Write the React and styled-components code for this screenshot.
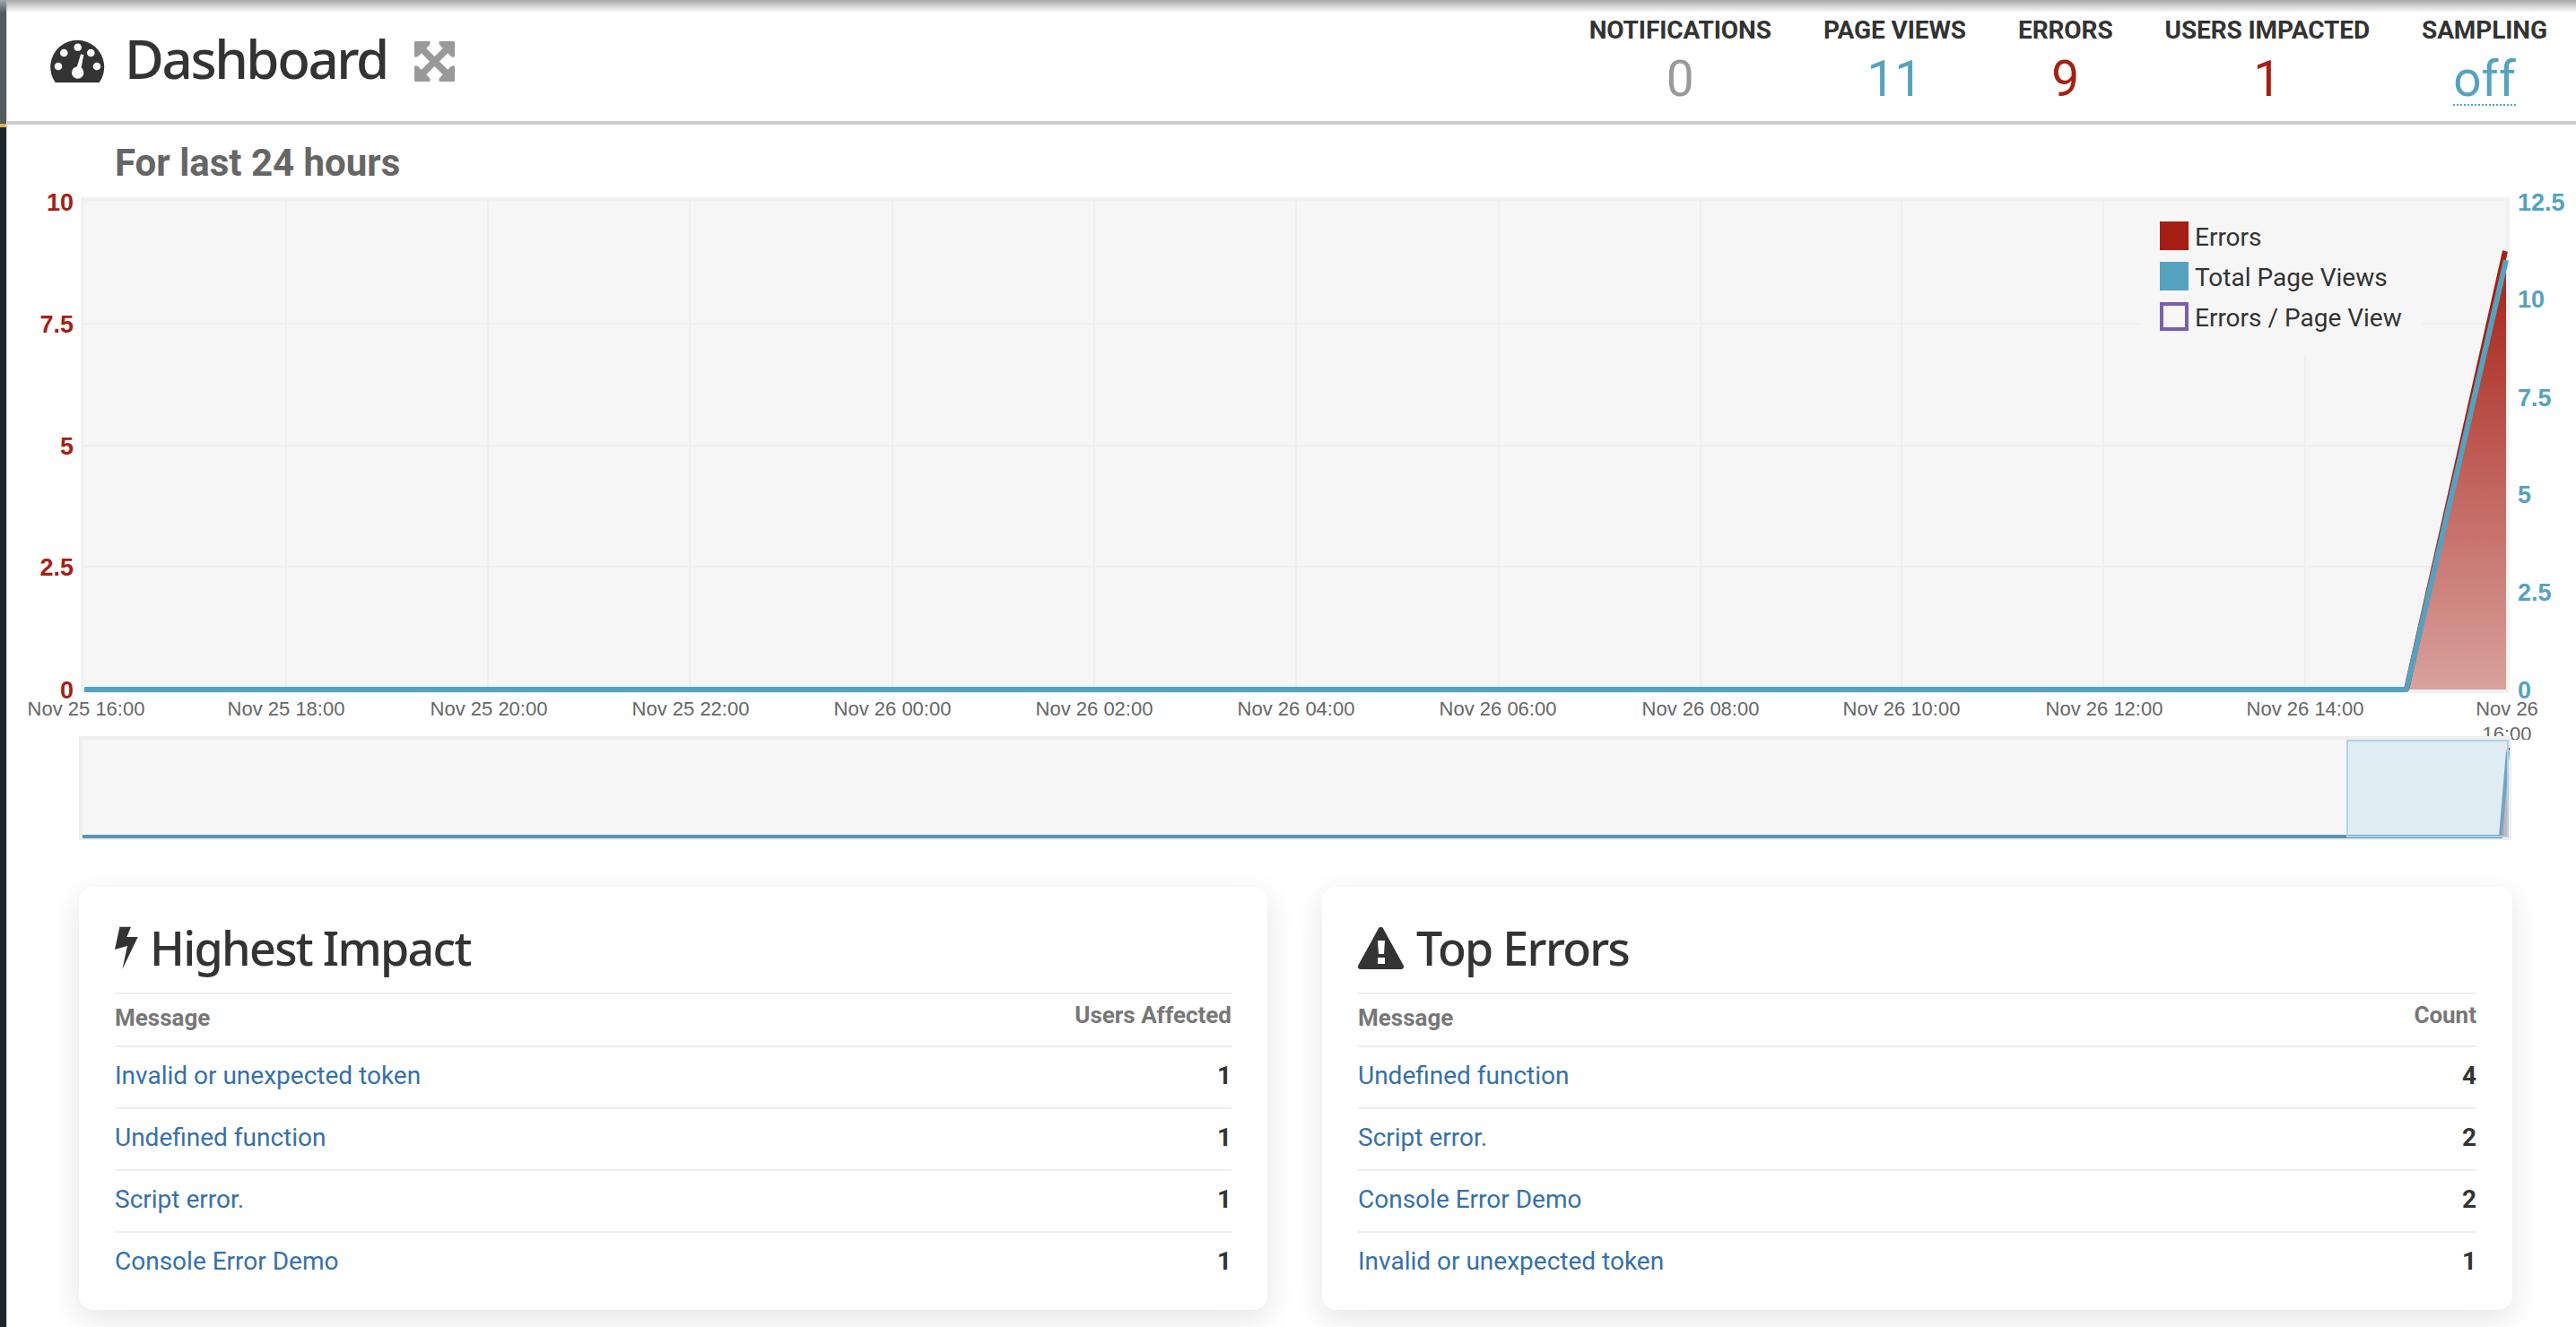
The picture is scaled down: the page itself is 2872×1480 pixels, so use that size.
import React from "react";
import styled, { createGlobalStyle } from "styled-components";

const Global = createGlobalStyle`
  html, body { margin: 0; padding: 0; background: #fff; }
  * { box-sizing: border-box; }
`;

const RED = "#a61f14";
const BLUE = "#55a2bf";

const Page = styled.div`
  position: relative;
  display: grid;
  grid-template-columns: 8px 1fr;
  height: 1480px;
  overflow: hidden;
  font-family: Roboto, "Liberation Sans", sans-serif;
  color: #333;
  background: #fff;
`;
const TopShade = styled.div`
  position: absolute;
  left: 0;
  right: 0;
  top: 0;
  height: 14px;
  background: linear-gradient(to bottom, #a8a8a8, rgba(255, 255, 255, 0));
  pointer-events: none;
`;
const Rail = styled.aside`
  display: flex;
  flex-direction: column;
  border-right: 1px solid #dcdcdc;
  background: #20262f;
`;
const RailTop = styled.div`
  height: 138px;
  background: #555a60;
`;
const RailMark = styled.div`
  height: 4px;
  background: #e0b050;
`;
const Main = styled.main`
  min-width: 0;
`;
const Header = styled.header`
  display: flex;
  justify-content: space-between;
  height: 139px;
  padding: 0 32px 0 48px;
  border-bottom: 4px solid #ccc;
`;
const TitleBlock = styled.div`
  display: flex;
  align-items: flex-start;
`;
const PageTitle = styled.h1`
  margin: 25px 0 0 22px;
  font: 500 60px/80px "Noto Sans", sans-serif;
  letter-spacing: -2.4px;
  color: #333;
`;
const GaugeIcon = styled.svg`
  width: 61px;
  height: 48px;
  margin-top: 44px;
`;
const ExpandIcon = styled.svg`
  width: 45px;
  height: 45px;
  margin: 46px 0 0 30px;
`;
const Stats = styled.div`
  display: flex;
  gap: 58px;
`;
const Stat = styled.div`
  display: flex;
  flex-direction: column;
  align-items: center;
  padding-top: 18px;
`;
const StatLabel = styled.div`
  font: 700 28px/32px Roboto, sans-serif;
  text-transform: uppercase;
  letter-spacing: -0.1px;
  color: #333;
`;
const StatValue = styled.div`
  margin-top: 7px;
  font: 400 55px/62px Roboto, sans-serif;
  color: ${(p) => p.$color};
`;
const StatToggle = styled(StatValue)`
  height: 61px;
  border-bottom: 2px dotted ${BLUE};
`;
const Range = styled.h2`
  height: 61px;
  margin: 0;
  padding: 20px 0 0 120px;
  font: 700 42px/46px Roboto, sans-serif;
  color: #666;
`;
const ChartSvg = styled.svg`
  display: block;
  width: 2864px;
  height: 740px;
`;
const AxisText = styled.text`
  font: 700 27px "Liberation Sans", sans-serif;
`;
const TimeText = styled.text`
  font: 400 22px "Liberation Sans", sans-serif;
  fill: #666;
`;
const LegendText = styled.text`
  font: 400 28px Roboto, sans-serif;
  fill: #333;
`;
const Cards = styled.section`
  display: grid;
  grid-template-columns: 1325px 1327px;
  gap: 61px;
  margin: 49px 0 0 80px;
`;
const Card = styled.article`
  height: 472px;
  padding: 0 40px;
  border-radius: 16px;
  background: #fff;
  box-shadow: 0 10px 34px rgba(0, 0, 0, 0.11);
`;
const CardTitle = styled.h3`
  display: flex;
  align-items: center;
  gap: ${(p) => p.$gap}px;
  height: 118px;
  margin: 0;
  padding-top: 18px;
  font: 500 52px/60px "Noto Sans", sans-serif;
  letter-spacing: -1.7px;
  color: #333;
`;
const Row = styled.div`
  display: flex;
  align-items: center;
  justify-content: space-between;
  height: ${(p) => (p.$head ? 59 : 69)}px;
  padding-bottom: ${(p) => (p.$head ? 5 : 4)}px;
  border-top: 2px solid #eee;
`;
const HeadCell = styled.span`
  font: 700 26px/30px Roboto, sans-serif;
  color: #777;
`;
const HeadCellEnd = styled(HeadCell)`
  margin-top: -6px;
`;
const ErrorLink = styled.a`
  font: 400 28px/34px Roboto, sans-serif;
  color: #3670a8;
  text-decoration: none;
`;
const Count = styled.span`
  font: 700 28px/34px Roboto, sans-serif;
  color: #333;
`;

const yLeft = [["10", 225], ["7.5", 361], ["5", 497], ["2.5", 632], ["0", 769]];
const yRight = [["12.5", 225], ["10", 333], ["7.5", 443], ["5", 551], ["2.5", 660], ["0", 769]];
const gridX = [319, 544, 769, 995, 1220, 1445, 1671, 1896, 2120, 2345, 2570];
const times = [
  ["Nov 25 16:00", 96], ["Nov 25 18:00", 319], ["Nov 25 20:00", 545], ["Nov 25 22:00", 770],
  ["Nov 26 00:00", 995], ["Nov 26 02:00", 1220], ["Nov 26 04:00", 1445], ["Nov 26 06:00", 1670],
  ["Nov 26 08:00", 1896], ["Nov 26 10:00", 2120], ["Nov 26 12:00", 2346], ["Nov 26 14:00", 2570],
];
const legend = [
  ["Errors", 247, RED],
  ["Total Page Views", 292, BLUE],
];

function Chart() {
  return (
    <ChartSvg viewBox="8 200 2864 740">
      <defs>
        <linearGradient id="errFill" x1="0" y1="0" x2="0" y2="1">
          <stop offset="0" stopColor="#a61f14" />
          <stop offset="1" stopColor="#d9a19d" />
        </linearGradient>
        <clipPath id="timeClip">
          <rect x="2700" y="770" width="172" height="55" />
        </clipPath>
      </defs>

      <rect x="90" y="220" width="2708" height="553" fill="#f1f1f1" />
      <rect x="94" y="224" width="2700" height="545" fill="#f6f6f6" />
      {gridX.map((x) => (
        <line key={x} x1={x} x2={x} y1="224" y2="769" stroke="#efefef" strokeWidth="2" />
      ))}
      {[361, 497, 632].map((y) => (
        <line key={y} x1="94" x2="2794" y1={y} y2={y} stroke="#efefef" strokeWidth="2" />
      ))}

      <rect x="2386" y="224" width="314" height="174" fill="#f6f6f6" />
      {legend.map(([label, y, c]) => (
        <g key={label}>
          <rect x="2408" y={y} width="32" height="32" fill={c} />
          <LegendText x="2447" y={y + 27}>{label}</LegendText>
        </g>
      ))}
      <rect x="2410" y="339" width="28" height="28" fill="none" stroke="#7a5fb0" strokeWidth="4" />
      <LegendText x="2447" y="364">Errors / Page View</LegendText>

      <polygon points="2684,769 2794,282 2794,769" fill="url(#errFill)" />
      <line x1="2683" y1="769" x2="2793" y2="280" stroke={RED} strokeWidth="6" />
      <polyline points="94,769 2683,769 2794,290" fill="none" stroke={BLUE} strokeWidth="6" strokeLinejoin="round" />

      {yLeft.map(([t, y]) => (
        <AxisText key={t} x="82" y={y + 10} textAnchor="end" fill={RED}>{t}</AxisText>
      ))}
      {yRight.map(([t, y]) => (
        <AxisText key={t} x="2807" y={y + 10} fill={BLUE}>{t}</AxisText>
      ))}
      {times.map(([t, x]) => (
        <TimeText key={t} x={x} y="798" textAnchor="middle">{t}</TimeText>
      ))}
      <g clipPath="url(#timeClip)">
        <TimeText x="2795" y="798" textAnchor="middle">Nov 26</TimeText>
        <TimeText x="2795" y="826" textAnchor="middle">16:00</TimeText>
      </g>

      <rect x="88" y="821" width="2712" height="116" fill="#eee" />
      <rect x="92" y="825" width="2704" height="108" fill="#f6f6f6" />
      <polygon points="2788,933 2797,836 2797,933" fill="#d9a19d" />
      <polyline points="92,933 2788,933 2796,838" fill="none" stroke="#5a93ad" strokeWidth="4" />
      <line x1="2796" y1="837" x2="2797" y2="834" stroke={RED} strokeWidth="3" />
      <rect x="2617" y="826" width="179" height="107" fill="#acd4ea" fillOpacity="0.3" stroke="#acd4ea" strokeWidth="2" />
    </ChartSvg>
  );
}

const impact = [
  ["Invalid or unexpected token", 1],
  ["Undefined function", 1],
  ["Script error.", 1],
  ["Console Error Demo", 1],
];
const top = [
  ["Undefined function", 4],
  ["Script error.", 2],
  ["Console Error Demo", 2],
  ["Invalid or unexpected token", 1],
];

function ErrorCard({ icon, title, gap, countLabel, rows }) {
  return (
    <Card>
      <CardTitle $gap={gap}>{icon}{title}</CardTitle>
      <Row $head>
        <HeadCell>Message</HeadCell>
        <HeadCellEnd>{countLabel}</HeadCellEnd>
      </Row>
      {rows.map(([m, n]) => (
        <Row key={m}>
          <ErrorLink href="#">{m}</ErrorLink>
          <Count>{n}</Count>
        </Row>
      ))}
    </Card>
  );
}

export default function App() {
  return (
    <Page>
      <Global />
      <Rail>
        <RailTop />
        <RailMark />
      </Rail>
      <Main>
        <Header>
          <TitleBlock>
            <GaugeIcon viewBox="0 0 61 48">
              <path d="M5.7 48 A30 30 0 1 1 54.7 48 Z" fill="#333" />
              <g fill="#fff">
                <circle cx="30.7" cy="8.7" r="4.3" />
                <circle cx="15.3" cy="15" r="4.3" />
                <circle cx="45.3" cy="15" r="4.3" />
                <circle cx="9" cy="30" r="4.3" />
                <circle cx="52" cy="30" r="4.3" />
                <circle cx="30.7" cy="37" r="6.7" />
                <polygon points="28.2,36 33.8,36 37.3,17 34,16.4" />
              </g>
            </GaugeIcon>
            <PageTitle>Dashboard</PageTitle>
            <ExpandIcon viewBox="0 0 45 45">
              <path d="M8 8 L37 37 M37 8 L8 37" stroke="#999" strokeWidth="7.5" />
              <path d="M1 0 H17 Q18.5 2.5 17 4 L4 17 Q1.5 18.5 0 17 V1 Z M44 0 H28 Q26.5 2.5 28 4 L41 17 Q43.5 18.5 45 17 V1 Z M1 45 H17 Q18.5 42.5 17 41 L4 28 Q1.5 26.5 0 28 V44 Z M44 45 H28 Q26.5 42.5 28 41 L41 28 Q43.5 26.5 45 28 V44 Z" fill="#999" />
            </ExpandIcon>
          </TitleBlock>
          <Stats>
            <Stat><StatLabel>Notifications</StatLabel><StatValue $color="#999">0</StatValue></Stat>
            <Stat><StatLabel>Page Views</StatLabel><StatValue $color={BLUE}>11</StatValue></Stat>
            <Stat><StatLabel>Errors</StatLabel><StatValue $color={RED}>9</StatValue></Stat>
            <Stat><StatLabel>Users Impacted</StatLabel><StatValue $color={RED}>1</StatValue></Stat>
            <Stat><StatLabel>Sampling</StatLabel><StatToggle $color={BLUE}>off</StatToggle></Stat>
          </Stats>
        </Header>
        <Range>For last 24 hours</Range>
        <Chart />
        <Cards>
          <ErrorCard
            title="Highest Impact"
            gap={13}
            countLabel="Users Affected"
            rows={impact}
            icon={
              <svg width="26" height="48" viewBox="0 0 26 48">
                <polygon points="5.4,0.7 18,0.7 13.4,12 25.7,12 8.4,48 14,22 0,26" fill="#333" />
              </svg>
            }
          />
          <ErrorCard
            title="Top Errors"
            gap={14}
            countLabel="Count"
            rows={top}
            icon={
              <svg width="51" height="47" viewBox="0 0 51 47">
                <path d="M25.5 3 L48 44 H3 Z" fill="#333" stroke="#333" strokeWidth="6" strokeLinejoin="round" />
                <path d="M22 15 H30 L29 30 H23 Z M22 34 H30 V41 H22 Z" fill="#fff" />
              </svg>
            }
          />
        </Cards>
      </Main>
      <TopShade />
    </Page>
  );
}
